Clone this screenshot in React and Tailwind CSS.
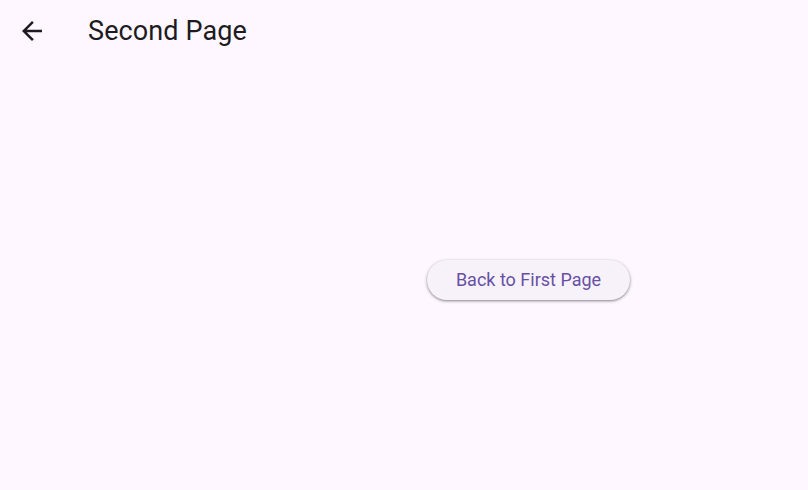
export default function App() {
  return (
    <div className="w-[808px] h-[490px] bg-[#FEF7FF] flex flex-col" style={{ fontFamily: "Roboto, 'Noto Sans', sans-serif" }}>
      <div className="h-[64px] flex items-center shrink-0">
        <div className="w-[88px] h-[64px] flex items-start pl-[17px] pt-[16px]">
          <svg width="30" height="30" viewBox="0 0 24 24" fill="#1D1B20">
            <path d="M20 11H7.83l5.59-5.59L12 4l-8 8 8 8 1.41-1.41L7.83 13H20v-2z" />
          </svg>
        </div>
        <div className="h-[64px] flex items-center pb-[2px] text-[27px] leading-[32px] text-[#1D1B20] font-normal tracking-[0.1px]">Second Page</div>
      </div>
      <div className="flex-1 flex items-center justify-center pl-[249px] pt-[6px]">
        <button className="h-[40px] px-[29px] rounded-full bg-[#F7F2FA] text-[#6750A4] text-[18px] leading-[20px] font-normal shadow-[0_1px_2px_rgba(0,0,0,0.3),0_1px_3px_1px_rgba(0,0,0,0.15)]">
          Back to First Page
        </button>
      </div>
    </div>
  );
}
